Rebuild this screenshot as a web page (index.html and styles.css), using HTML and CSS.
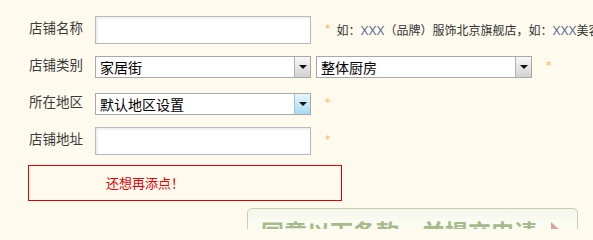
FILE: index.html
```html
<!DOCTYPE html>
<html lang="zh-CN">
<head>
<meta charset="utf-8">
<link rel="stylesheet" href="styles.css">
</head>
<body>
<div class="form">
  <div class="row">
    <span class="label">店铺名称</span>
    <div class="input"></div>
    <span class="star">*</span>
    <span class="hint">如：<span class="x">XXX</span>（品牌）服饰北京旗舰店，如：<span class="x">XXX</span>美容</span>
  </div>
  <div class="row">
    <span class="label">店铺类别</span>
    <div class="select"><span class="val">家居街</span><span class="arrow"></span></div>
    <div class="select second"><span class="val">整体厨房</span><span class="arrow"></span></div>
    <span class="star">*</span>
  </div>
  <div class="row">
    <span class="label">所在地区</span>
    <div class="select"><span class="val">默认地区设置</span><span class="arrow hot"></span></div>
    <span class="star">*</span>
  </div>
  <div class="row">
    <span class="label">店铺地址</span>
    <div class="input alt"></div>
    <span class="star">*</span>
  </div>
  <div class="notice">还想再添点！</div>
  <div class="submit"><span class="btn-text">同意以下条款，并提交申请</span><span class="tri"></span></div>
</div>
</body>
</html>
```
FILE: styles.css
```css
html, body {
  margin: 0;
  padding: 0;
  background: #fefaee;
}
body {
  width: 593px;
  height: 229px;
  overflow: hidden;
  font-family: "Noto Sans CJK SC", "Noto Sans", sans-serif;
  color: #333;
}
.form {
  padding: 11px 0 0 29px;
  height: 218px;
  overflow: hidden;
}
.row {
  display: flex;
  align-items: center;
  height: 37px;
  white-space: nowrap;
}
.label {
  width: 66px;
  font-size: 13.5px;
  color: #3a3a3a;
  padding-bottom: 5px;
  flex: none;
}
.input {
  width: 214px;
  height: 26px;
  border: 1px solid #b9b9b9;
  background: #fff;
  box-shadow: inset 1px 1px 3px rgba(0,0,0,0.10);
  flex: none;
}
.input.alt {
  border-color: #b4b9c4;
}
.star {
  color: #f5b94a;
  font-size: 11px;
  margin-left: 14px;
  padding-bottom: 2px;
  font-family: "DejaVu Sans", sans-serif;
}
.hint {
  margin-left: 6px;
  font-size: 12px;
  color: #333;
}
.x {
  color: #5a6a8e;
  font-family: "Liberation Sans", sans-serif;
  font-size: 12px;
}
.select {
  width: 214px;
  height: 20px;
  border: 1px solid #a8a8a8;
  background: #fff;
  display: flex;
  align-items: center;
  flex: none;
}
.select.second {
  margin-left: 5px;
}
.val {
  flex: 1;
  font-size: 14px;
  color: #000;
  padding-left: 4px;
  line-height: 20px;
}
.arrow {
  width: 15px;
  height: 20px;
  border-left: 1px solid #b0b0b0;
  background: linear-gradient(#f8f8f8, #d2d2d2);
  display: flex;
  align-items: center;
  justify-content: center;
}
.arrow::after {
  content: "";
  border-left: 4px solid transparent;
  border-right: 4px solid transparent;
  border-top: 4px solid #111;
  margin-top: 1px;
}
.arrow.hot {
  background: linear-gradient(#eaf6fd, #a8d9f5);
  border-left-color: #9fc2d9;
}
.notice {
  margin-top: 6px;
  width: 312px;
  height: 34px;
  border: 1px solid #e30000;
  margin-left: -1px;
  color: #e60000;
  font-size: 13px;
  line-height: 34px;
  text-indent: 77px;
}
.submit {
  margin: 7px 0 0 218px;
  width: 331px;
  height: 40px;
  border: 1px solid #c7cfae;
  border-radius: 5px;
  background: linear-gradient(#f5f7ea, #fbfcf3 40%, #f1f5e4);
  display: flex;
  align-items: flex-start;
  padding-top: 8px;
  box-sizing: border-box;
}
.btn-text {
  margin-left: 13px;
  font-size: 23px;
  line-height: 28px;
  color: #a6ba8c;
  font-weight: bold;
  white-space: nowrap;
}
.tri {
  margin-left: 14px;
  margin-top: 5px;
  width: 0;
  height: 0;
  border-top: 10px solid transparent;
  border-bottom: 10px solid transparent;
  border-left: 11px solid #d9a59b;
}
```
